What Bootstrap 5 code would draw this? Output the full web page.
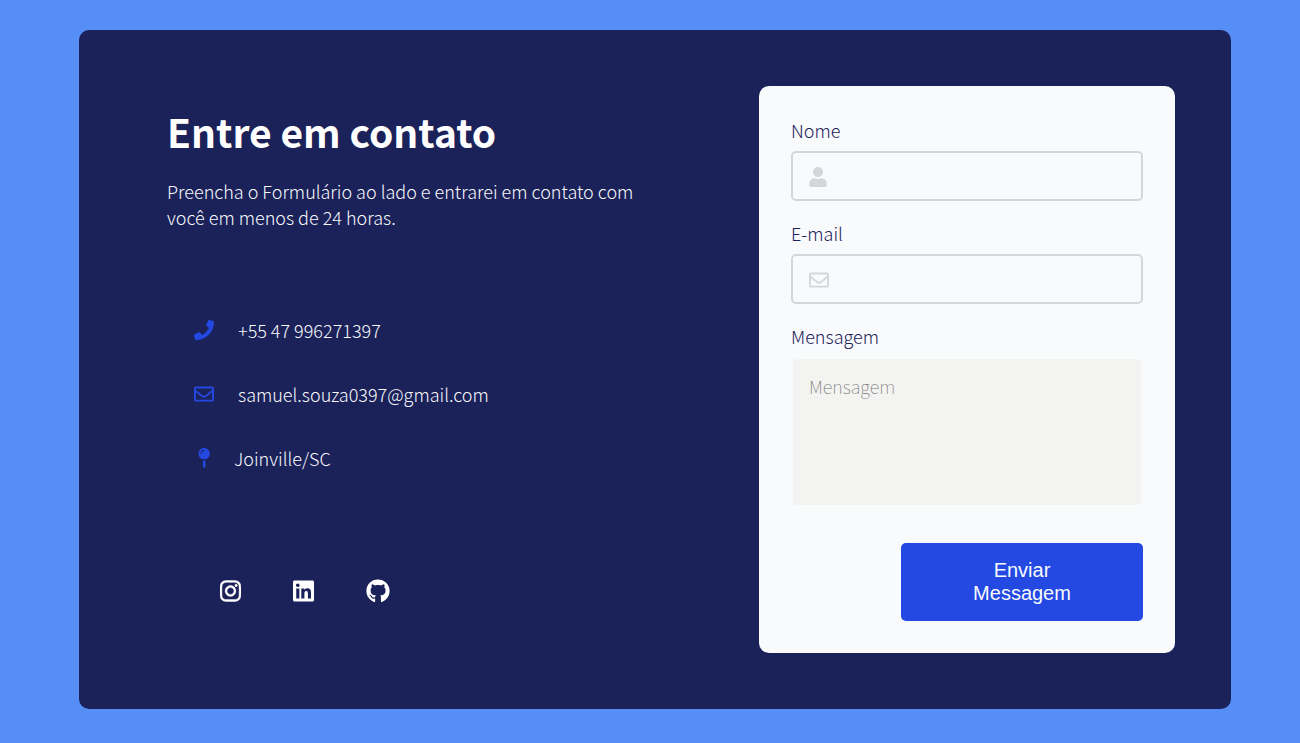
<!DOCTYPE html>
<html lang="pt-BR">
<head>
<meta charset="utf-8">
<meta name="viewport" content="width=device-width, initial-scale=1">
<title>Entre em contato</title>
<link href="https://cdn.jsdelivr.net/npm/bootstrap@5.3.0/dist/css/bootstrap.min.css" rel="stylesheet">
<style>
  body { background: #578ef5; font-family: "Noto Sans CJK SC", sans-serif; font-weight: 300; font-size: 18px; line-height: 26px; color: #f8fafc; }
  .page { padding: 30px 69px 34px 79px; }
  .panel { background: #1b2159; border-radius: 10px; padding: 56px; }
  .intro { padding: 16px 32px; max-width: 540px; }
  .intro h1 { font-size: 39px; line-height: 58px; font-weight: 700; margin-bottom: 18px; color: #fff; }
  .contacts { margin: 87px 0 0 27px; gap: 38px; }
  .contacts li { gap: 24px; }
  .contacts svg, .field svg { fill: currentColor; height: 20px; flex: none; }
  .contacts svg { color: #2349e2; }
  .contacts a, .social a { color: inherit; text-decoration: none; }
  .social { margin: 108px 0 0 53px; gap: 52px; }
  .social svg { display: block; fill: #fff; height: 24px; }
  .form-box { background: #f8fafc; border-radius: 10px; padding: 31px 32px 32px; width: 416px; max-width: 100%; color: #1b2159; }
  .form-box label { display: block; margin-bottom: 8px; }
  .field { position: relative; margin-bottom: 19px; }
  .field svg { position: absolute; left: 18px; top: 16px; color: #d5d6d7; }
  .field .form-control { height: 50px; border: 2px solid #d5d6d7; border-radius: 5px; background: transparent; padding: 0 16px 0 52px; }
  .form-box textarea.form-control { height: 150px; border: 2px solid #f8fafc; border-radius: 5px; background: #f3f3f1; background-clip: padding-box; padding: 14px 16px; font: inherit; resize: none; }
  .form-box textarea::placeholder { color: #757575; font-weight: 100; opacity: 1; }
  .send { background: #2349e2; color: #f8fafc; width: 242px; padding: 16px 64px; margin-top: 36px; border: 0; border-radius: 5px; font: 20px/23px "Liberation Sans", Arial, sans-serif; }
  .send:hover { background: #1b3bc4; color: #fff; }
</style>
</head>
<body>
<main class="page">
  <div class="panel d-flex flex-wrap flex-lg-nowrap justify-content-between align-items-start">
    <section class="intro">
      <h1>Entre em contato</h1>
      <p class="mb-0">Preencha o Formulário ao lado e entrarei em contato com você em menos de 24 horas.</p>
      <ul class="contacts list-unstyled d-flex flex-column">
        <li class="d-flex align-items-center">
          <svg viewBox="0 0 512 512" width="20" aria-hidden="true"><path d="M493.4 24.6l-104-24c-11.3-2.6-22.9 3.3-27.5 13.9l-48 112c-4.2 9.8-1.4 21.3 6.9 28l60.6 49.6c-36 76.7-98.9 140.5-177.2 177.2l-49.6-60.6c-6.8-8.3-18.2-11.1-28-6.9l-112 48C3.9 366.5-2 378.1.6 389.4l24 104C27.1 504.2 36.7 512 48 512c256.1 0 464-207.5 464-464 0-11.2-7.7-20.9-18.6-23.4z"/></svg>
          <a href="tel:+5547996271397">+55 47 996271397</a>
        </li>
        <li class="d-flex align-items-center">
          <svg viewBox="0 0 512 512" width="20" aria-hidden="true"><path d="M464 64H48C21.49 64 0 85.49 0 112v288c0 26.51 21.49 48 48 48h416c26.51 0 48-21.49 48-48V112c0-26.51-21.49-48-48-48zm0 48v40.805c-22.422 18.259-58.168 46.651-134.587 106.49-16.841 13.247-50.201 45.072-73.413 44.701-23.208.375-56.579-31.459-73.413-44.701C106.18 199.465 70.425 171.067 48 152.805V112h416zM48 400V214.398c22.914 18.251 55.409 43.862 104.938 82.646 21.857 17.205 60.134 55.186 103.062 54.955 42.717.231 80.509-37.199 103.053-54.947 49.528-38.783 82.032-64.401 104.947-82.653V400H48z"/></svg>
          <a href="mailto:samuel.souza0397@gmail.com">samuel.souza0397@gmail.com</a>
        </li>
        <li class="d-flex align-items-center">
          <svg viewBox="-112 0 400 512" width="16" aria-hidden="true"><path d="M112 316.94v156.69l22.02 33.02c4.75 7.12 15.22 7.12 19.97 0L176 473.63V316.94c-10.39 1.92-21.06 3.06-32 3.06s-21.61-1.14-32-3.06zM144 0C64.47 0 0 64.47 0 144s64.47 144 144 144 144-64.47 144-144S223.53 0 144 0zm0 76c-37.5 0-68 30.5-68 68 0 6.62-5.38 12-12 12s-12-5.38-12-12c0-50.73 41.28-92 92-92 6.62 0 12 5.38 12 12s-5.38 12-12 12z"/></svg>
          <span>Joinville/SC</span>
        </li>
      </ul>
      <nav class="social d-flex" aria-label="Redes sociais">
        <a href="#" aria-label="Instagram"><svg viewBox="0 0 448 512" width="21" stroke="#fff" stroke-width="10"><path d="M224.1 141c-63.6 0-114.9 51.3-114.9 114.9s51.3 114.9 114.9 114.9S339 319.5 339 255.9 287.7 141 224.1 141zm0 189.6c-41.1 0-74.7-33.5-74.7-74.7s33.5-74.7 74.7-74.7 74.7 33.5 74.7 74.7-33.6 74.7-74.7 74.7zm146.4-194.3c0 14.9-12 26.8-26.8 26.8-14.9 0-26.8-12-26.8-26.8s12-26.8 26.8-26.8 26.8 12 26.8 26.8zm76.1 27.2c-1.7-35.9-9.9-67.7-36.2-93.9-26.2-26.2-58-34.4-93.9-36.2-37-2.1-147.9-2.1-184.9 0-35.8 1.7-67.6 9.9-93.9 36.1s-34.4 58-36.2 93.9c-2.1 37-2.1 147.9 0 184.9 1.7 35.9 9.9 67.7 36.2 93.9s58 34.4 93.9 36.2c37 2.1 147.9 2.1 184.9 0 35.9-1.7 67.7-9.9 93.9-36.2 26.2-26.2 34.4-58 36.2-93.9 2.1-37 2.1-147.8 0-184.8zM398.8 388c-7.8 19.6-22.9 34.7-42.6 42.6-29.5 11.7-99.5 9-132.1 9s-102.7 2.6-132.1-9c-19.6-7.8-34.7-22.9-42.6-42.6-11.7-29.5-9-99.5-9-132.1s-2.6-102.7 9-132.1c7.8-19.6 22.9-34.7 42.6-42.6 29.5-11.7 99.5-9 132.1-9s102.7-2.6 132.1 9c19.6 7.8 34.7 22.9 42.6 42.6 11.7 29.5 9 99.5 9 132.1s2.7 102.7-9 132.1z"/></svg></a>
        <a href="#" aria-label="LinkedIn"><svg viewBox="0 0 448 512" width="21"><path d="M416 32H31.9C14.3 32 0 46.5 0 64.3v383.4C0 465.5 14.3 480 31.9 480H416c17.6 0 32-14.5 32-32.3V64.3c0-17.8-14.4-32.3-32-32.3zM135.4 416H69V202.2h66.5V416zm-33.2-243c-21.3 0-38.5-17.3-38.5-38.5S80.9 96 102.2 96c21.2 0 38.5 17.3 38.5 38.5 0 21.3-17.2 38.5-38.5 38.5zm282.1 243h-66.4V312c0-24.8-.5-56.7-34.5-56.7-34.6 0-39.9 27-39.9 54.9V416h-66.4V202.2h63.7v29.2h.9c8.9-16.8 30.6-34.5 62.9-34.5 67.2 0 79.7 44.3 79.7 101.9V416z"/></svg></a>
        <a href="#" aria-label="GitHub"><svg viewBox="0 0 496 512" width="24"><path d="M165.9 397.4c0 2-2.3 3.6-5.2 3.6-3.3.3-5.6-1.3-5.6-3.6 0-2 2.3-3.6 5.2-3.6 3-.3 5.6 1.3 5.6 3.6zm-31.1-4.5c-.7 2 1.3 4.3 4.3 4.9 2.6 1 5.6 0 6.2-2s-1.3-4.3-4.3-5.2c-2.6-.7-5.5.3-6.2 2.3zm44.2-1.7c-2.9.7-4.9 2.6-4.6 4.9.3 2 2.9 3.3 5.9 2.6 2.9-.7 4.9-2.6 4.6-4.6-.3-1.9-3-3.2-5.9-2.9zM244.8 8C106.1 8 0 113.3 0 252c0 110.9 69.8 205.8 169.5 239.2 12.8 2.3 17.3-5.6 17.3-12.1 0-6.2-.3-40.4-.3-61.4 0 0-70 15-84.7-29.8 0 0-11.4-29.1-27.8-36.6 0 0-22.9-15.7 1.6-15.4 0 0 24.9 2 38.6 25.8 21.9 38.6 58.6 27.5 72.9 20.9 2.3-16 8.8-27.1 16-33.7-55.9-6.2-112.3-14.3-112.3-110.5 0-27.5 7.6-41.3 23.6-58.9-2.6-6.5-11.1-33.3 2.6-67.9 20.9-6.5 69 27 69 27 20-5.6 41.5-8.5 62.8-8.5s42.8 2.9 62.8 8.5c0 0 48.1-33.6 69-27 13.7 34.7 5.2 61.4 2.6 67.9 16 17.7 25.8 31.5 25.8 58.9 0 96.5-58.9 104.2-114.8 110.5 9.2 7.9 17 22.9 17 46.4 0 33.7-.3 75.4-.3 83.6 0 6.5 4.6 14.4 17.3 12.1C428.2 457.8 496 362.9 496 252 496 113.3 383.5 8 244.8 8z"/></svg></a>
      </nav>
    </section>
    <form class="form-box">
      <label for="nome">Nome</label>
      <div class="field">
        <svg viewBox="0 0 448 512" width="18" aria-hidden="true"><path d="M224 256c70.7 0 128-57.3 128-128S294.7 0 224 0 96 57.3 96 128s57.3 128 128 128zm89.6 32h-16.7c-22.2 10.2-46.9 16-72.9 16s-50.6-5.8-72.9-16h-16.7C60.2 288 0 348.2 0 422.4V464c0 26.5 21.5 48 48 48h352c26.5 0 48-21.5 48-48v-41.6c0-74.2-60.2-134.4-134.4-134.4z"/></svg>
        <input class="form-control" type="text" id="nome">
      </div>
      <label for="email">E-mail</label>
      <div class="field">
        <svg viewBox="0 0 512 512" width="20" aria-hidden="true"><path d="M464 64H48C21.49 64 0 85.49 0 112v288c0 26.51 21.49 48 48 48h416c26.51 0 48-21.49 48-48V112c0-26.51-21.49-48-48-48zm0 48v40.805c-22.422 18.259-58.168 46.651-134.587 106.49-16.841 13.247-50.201 45.072-73.413 44.701-23.208.375-56.579-31.459-73.413-44.701C106.18 199.465 70.425 171.067 48 152.805V112h416zM48 400V214.398c22.914 18.251 55.409 43.862 104.938 82.646 21.857 17.205 60.134 55.186 103.062 54.955 42.717.231 80.509-37.199 103.053-54.947 49.528-38.783 82.032-64.401 104.947-82.653V400H48z"/></svg>
        <input class="form-control" type="email" id="email">
      </div>
      <label for="mensagem">Mensagem</label>
      <textarea class="form-control" id="mensagem" placeholder="Mensagem"></textarea>
      <button class="send btn d-block ms-auto" type="submit">Enviar Messagem</button>
    </form>
  </div>
</main>
<script src="https://cdn.jsdelivr.net/npm/bootstrap@5.3.0/dist/js/bootstrap.bundle.min.js"></script>
</body>
</html>
